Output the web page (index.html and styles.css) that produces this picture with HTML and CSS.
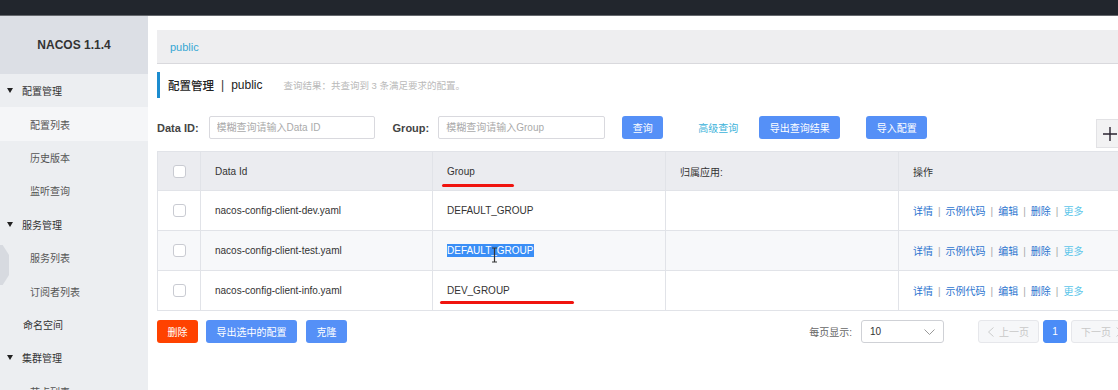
FILE: index.html
```html
<!DOCTYPE html>
<html lang="zh-CN">
  <head>
    <meta charset="utf-8" />
    <meta name="viewport" content="width=device-width, initial-scale=1.0" />
    <title>Nacos</title>
    <link rel="stylesheet" href="styles.css">
  </head>
  <body>
    <div class="topbar"></div>
    <div class="layout">
      <aside class="sidebar">
        <div class="brand">NACOS 1.1.4</div>
        <ul class="menu">
          <li class="group"><span class="caret"></span>配置管理</li>
          <li class="item active">配置列表</li>
          <li class="item">历史版本</li>
          <li class="item">监听查询</li>
          <li class="group"><span class="caret"></span>服务管理</li>
          <li class="item">服务列表</li>
          <li class="item">订阅者列表</li>
          <li class="plain">命名空间</li>
          <li class="group"><span class="caret"></span>集群管理</li>
          <li class="item">节点列表</li>
        </ul>
        <div class="edge-tab"></div>
      </aside>

      <main class="main">
        <div class="content">
          <div class="crumb">public</div>

          <div class="title">
            <span class="title-main">配置管理</span>
            <span class="title-sep">|</span>
            <span class="title-ns">public</span>
            <span class="title-note">查询结果：共查询到 3 条满足要求的配置。</span>
          </div>

          <div class="filters">
            <label class="label" for="dataId">Data ID:</label>
            <input id="dataId" class="input" type="text" placeholder="模糊查询请输入Data ID" />
            <label class="label label-group" for="group">Group:</label>
            <input id="group" class="input" type="text" placeholder="模糊查询请输入Group" />
            <button class="btn btn-query">查询</button>
            <a class="link-adv">高级查询</a>
            <button class="btn btn-export">导出查询结果</button>
            <button class="btn btn-import">导入配置</button>
            <div class="add-box">
              <svg width="14" height="14" viewBox="0 0 14 14"><path d="M7 0v14M0 7h14" stroke="#2a2330" stroke-width="1.4"/></svg>
            </div>
          </div>

          <table class="grid">
            <colgroup>
              <col style="width:43px">
              <col style="width:232px">
              <col style="width:233px">
              <col style="width:233px">
              <col>
            </colgroup>
            <thead>
              <tr>
                <th><span class="check"></span></th>
                <th>Data Id</th>
                <th class="mark-cell">Group<span class="mark mark-head"></span></th>
                <th>归属应用:</th>
                <th>操作</th>
              </tr>
            </thead>
            <tbody>
              <tr>
                <td><span class="check"></span></td>
                <td>nacos-config-client-dev.yaml</td>
                <td>DEFAULT_GROUP</td>
                <td></td>
                <td class="actions"><a>详情</a><i>|</i><a>示例代码</a><i>|</i><a>编辑</a><i>|</i><a>删除</a><i>|</i><a class="more">更多</a></td>
              </tr>
              <tr class="alt">
                <td><span class="check"></span></td>
                <td>nacos-config-client-test.yaml</td>
                <td class="mark-cell"><span class="selected">DEFAULT_GROUP</span>
                  <svg class="ibeam" width="7" height="16" viewBox="0 0 7 16"><path d="M1 1h5M3.5 1v14M1 15h5" stroke="#333" stroke-width="1.2" fill="none"/></svg>
                </td>
                <td></td>
                <td class="actions"><a>详情</a><i>|</i><a>示例代码</a><i>|</i><a>编辑</a><i>|</i><a>删除</a><i>|</i><a class="more">更多</a></td>
              </tr>
              <tr>
                <td><span class="check"></span></td>
                <td>nacos-config-client-info.yaml</td>
                <td class="mark-cell">DEV_GROUP<span class="mark mark-row"></span></td>
                <td></td>
                <td class="actions"><a>详情</a><i>|</i><a>示例代码</a><i>|</i><a>编辑</a><i>|</i><a>删除</a><i>|</i><a class="more">更多</a></td>
              </tr>
            </tbody>
          </table>

          <div class="footer">
            <button class="btn btn-danger">删除</button>
            <button class="btn btn-export-sel">导出选中的配置</button>
            <button class="btn btn-clone">克隆</button>

            <div class="pager">
              <span class="pager-label">每页显示:</span>
              <div class="select">
                <span>10</span>
                <svg width="11" height="6" viewBox="0 0 11 6"><path d="M0.5 0.5l5 5 5-5" stroke="#999" fill="none"/></svg>
              </div>
              <button class="page page-prev">
                <svg width="6" height="10" viewBox="0 0 6 10"><path d="M5.5 0.5l-5 4.5 5 4.5" stroke="#ccc" fill="none"/></svg>
                上一页
              </button>
              <button class="page page-current">1</button>
              <button class="page page-next">
                下一页
                <svg width="6" height="10" viewBox="0 0 6 10"><path d="M0.5 0.5l5 4.5-5 4.5" stroke="#ccc" fill="none"/></svg>
              </button>
            </div>
          </div>
        </div>
      </main>
    </div>
  </body>
</html>
```

FILE: styles.css
```css
* {
  box-sizing: border-box;
}

html,
body {
  margin: 0;
  height: 100%;
}

body {
  font-family: "Liberation Sans", "Noto Sans CJK SC", sans-serif;
  font-size: 10px;
  color: #333;
  background: #fff;
  overflow: hidden;
}

button,
input {
  font-family: inherit;
  outline: none;
}

.topbar {
  height: 16px;
  background: #22262d;
  border-bottom: 1px solid #65686d;
}

.layout {
  display: flex;
  height: calc(100vh - 16px);
}

/* sidebar */
.sidebar {
  position: relative;
  width: 148px;
  flex: none;
  background: #eceef1;
}

.brand {
  height: 58px;
  display: flex;
  align-items: center;
  justify-content: center;
  background: #dcdfe5;
  font-size: 12px;
  font-weight: bold;
  color: #333;
}

.menu {
  list-style: none;
  margin: 0;
  padding: 0;
}

.menu li {
  height: 33.4px;
  display: flex;
  align-items: center;
  font-size: 10px;
  color: #333;
}

.menu .group {
  padding-left: 7px;
}

.caret {
  width: 0;
  height: 0;
  margin-right: 9px;
  border-left: 3.5px solid transparent;
  border-right: 3.5px solid transparent;
  border-top: 5px solid #222;
}

.menu .item {
  padding-left: 30px;
  color: #555;
}

.menu .item.active {
  background: #f5f6f8;
}

.menu .plain {
  padding-left: 23px;
}

.edge-tab {
  position: absolute;
  left: 0;
  top: 229px;
  width: 9px;
  height: 40px;
  background: #d7dae0;
  clip-path: polygon(0 0, 30% 0, 100% 25%, 100% 75%, 30% 100%, 0 100%);
}

/* main */
.main {
  flex: 1;
  min-width: 0;
  padding: 14px 0 0 9px;
}

.content {
  width: 970px;
}

.crumb {
  height: 34px;
  display: flex;
  align-items: center;
  padding-left: 13px;
  background: #eeeef0;
  border-bottom: 1px solid #d9d9dd;
  color: #35a7d4;
  font-size: 11px;
}

.title {
  margin-top: 8px;
  height: 26px;
  display: flex;
  align-items: center;
  padding-left: 8px;
  border-left: 3px solid #1c8ccf;
}

.title-main {
  font-size: 11.5px;
  color: #222;
  font-weight: 500;
}

.title-sep {
  margin: 0 7px;
  font-size: 12px;
}

.title-ns {
  font-size: 12px;
  color: #222;
}

.title-note {
  margin-left: 21px;
  font-size: 9.5px;
  color: #b9b9b9;
}

/* filters */
.filters {
  margin-top: 18px;
  height: 23px;
  display: flex;
  align-items: center;
}

.label {
  font-size: 11px;
  font-weight: bold;
  color: #444;
}

.label-group {
  margin-left: 18px;
}

.input {
  height: 23px;
  width: 167px;
  margin-left: 9px;
  padding: 0 7px;
  border: 1px solid #d9d9de;
  border-radius: 2px;
  font-size: 10px;
  color: #333;
}

#dataId {
  width: 166px;
  margin-left: 10px;
}

.input::placeholder {
  color: #aaa;
}

.btn {
  height: 23px;
  padding: 0 10.5px;
  border: 0;
  border-radius: 3px;
  background: #5590f7;
  color: #fff;
  font-size: 10px;
  white-space: nowrap;
}

.btn-query {
  margin-left: 17px;
}

.link-adv {
  margin-left: 35px;
  color: #3cb3da;
  font-size: 10px;
}

.btn-export {
  margin-left: 21px;
}

.btn-import {
  margin-left: 26px;
}

.add-box {
  align-self: flex-start;
  flex: none;
  margin: 3px 3px 0 auto;
  width: 28px;
  height: 29px;
  display: flex;
  align-items: center;
  justify-content: center;
  background: #f2f2f3;
  border: 1px solid #e2e2e5;
}

/* table */
.grid {
  margin-top: 12px;
  width: 100%;
  table-layout: fixed;
  border-collapse: collapse;
}

.grid th,
.grid td {
  border: 1px solid #e1e3e8;
  padding: 0 0 0 14px;
  text-align: left;
  font-weight: normal;
  color: #333;
  font-size: 10px;
  white-space: nowrap;
}

.grid th {
  height: 39px;
  background: #ebecf0;
}

.grid td {
  height: 40px;
}

.grid tr.alt td {
  background: #f7f8fa;
}

.check {
  display: block;
  width: 13px;
  height: 13px;
  margin-left: 1px;
  background: #fff;
  border: 1px solid #c9cbd2;
  border-radius: 3px;
}

.mark-cell {
  position: relative;
}

.mark {
  position: absolute;
  height: 3px;
  border-radius: 2px;
  background: #f0140f;
}

.mark-head {
  left: 9px;
  top: 32px;
  width: 72px;
}

.mark-row {
  left: 7px;
  top: 30px;
  width: 134px;
}

.selected {
  background: #3a8ef6;
  color: #fff;
  padding: 1px 0;
}

.ibeam {
  position: absolute;
  left: 58px;
  top: 16px;
}

.actions a {
  color: #2b74cf;
}

.actions a.more {
  color: #5cc6ea;
}

.actions i {
  font-style: normal;
  color: #a8a8a8;
  margin: 0 5px;
}

/* footer */
.footer {
  margin-top: 9px;
  height: 23px;
  display: flex;
  align-items: center;
}

.btn-danger {
  background: #ff4200;
}

.btn-export-sel {
  margin-left: 8px;
}

.btn-clone {
  margin-left: 9px;
}

.pager {
  margin-left: auto;
  margin-right: -5px;
  display: flex;
  align-items: center;
}

.pager-label {
  color: #666;
  font-size: 10px;
}

.select {
  margin-left: 9px;
  width: 83px;
  height: 23px;
  display: flex;
  align-items: center;
  justify-content: space-between;
  padding: 0 8px 0 8px;
  border: 1px solid #cfd1d6;
  border-radius: 3px;
  color: #333;
}

.page {
  flex: none;
  height: 23px;
  margin-left: 4px;
  border: 1px solid #e6e7eb;
  border-radius: 3px;
  background: #f6f7f9;
  color: #c8c8c8;
  font-size: 10px;
  white-space: nowrap;
  display: flex;
  align-items: center;
  justify-content: center;
  gap: 5px;
  padding: 0 6px;
}

.page-prev {
  margin-left: 34px;
  width: 61px;
}

.page-current {
  width: 24px;
  padding: 0;
  background: #4b8cf7;
  border-color: #4b8cf7;
  color: #fff;
}

.page-next {
  width: 61px;
}
```
